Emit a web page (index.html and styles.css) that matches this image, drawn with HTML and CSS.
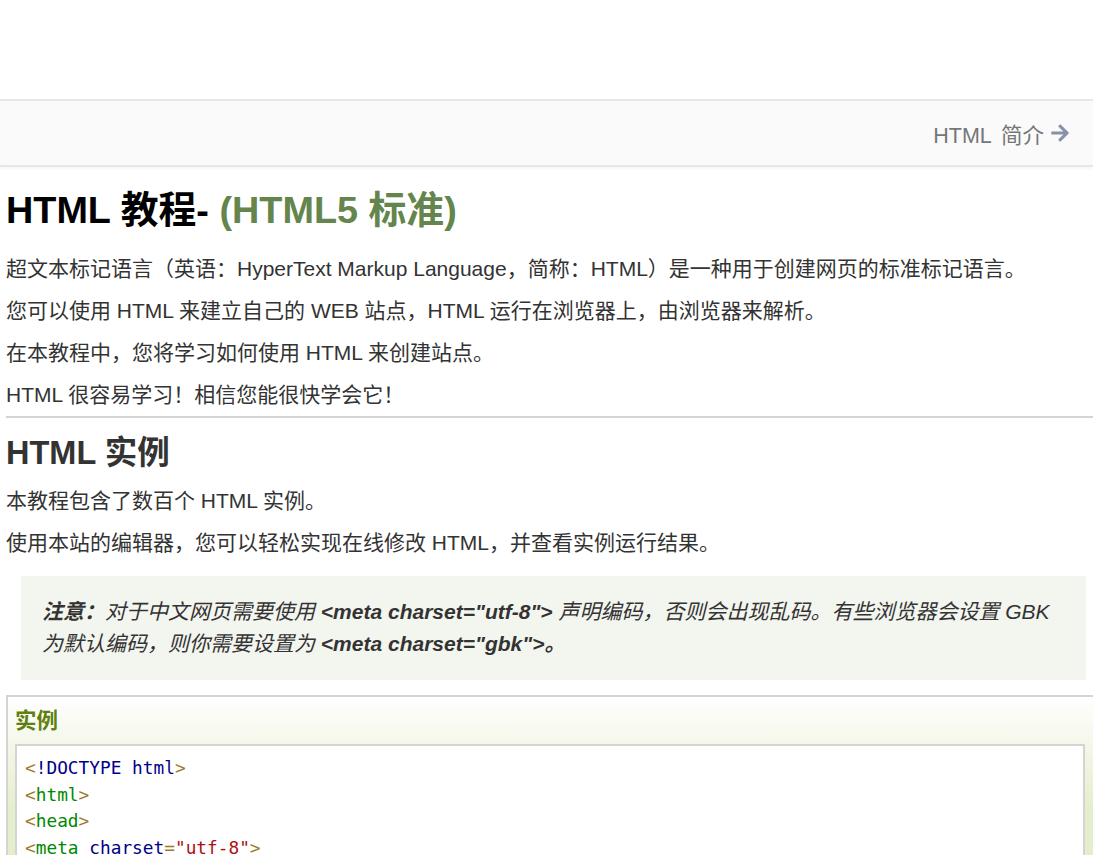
FILE: index.html
```html
<!DOCTYPE html>
<html lang="zh-CN">
<head>
<meta charset="utf-8">
<title>HTML 教程</title>
<link rel="stylesheet" href="styles.css">
</head>
<body>
<div class="top-space"></div>
<nav class="nav-bar">
  <a class="next-link" href="#">HTML 简介
    <svg class="arrow" viewBox="0 0 448 512" width="20" height="20" aria-hidden="true"><path fill="currentColor" d="M190.5 66.9l22.2-22.2c9.4-9.4 24.6-9.4 33.9 0L441 239c9.4 9.4 9.4 24.6 0 33.9L246.6 467.3c-9.4 9.4-24.6 9.4-33.9 0l-22.2-22.2c-9.5-9.5-9.3-25 .4-34.3L311.4 296H24c-13.3 0-24-10.7-24-24v-32c0-13.3 10.7-24 24-24h287.4L190.9 101.2c-9.8-9.3-10-24.8-.4-34.3z"/></svg>
  </a>
</nav>
<main class="article">
  <h1 class="title">HTML 教程- <span class="title-sub">(HTML5 标准)</span></h1>
  <p>超文本标记语言（英语：HyperText Markup Language，简称：HTML）是一种用于创建网页的标准标记语言。</p>
  <p>您可以使用 HTML 来建立自己的 WEB 站点，HTML 运行在浏览器上，由浏览器来解析。</p>
  <p>在本教程中，您将学习如何使用 HTML 来创建站点。</p>
  <p>HTML 很容易学习！相信您能很快学会它！</p>
  <hr class="divider">
  <h2 class="section-title">HTML 实例</h2>
  <p>本教程包含了数百个 HTML 实例。</p>
  <p>使用本站的编辑器，您可以轻松实现在线修改 HTML，并查看实例运行结果。</p>
  <div class="note">
    <p><strong>注意：</strong>对于中文网页需要使用 <strong>&lt;meta charset="utf-8"&gt;</strong> 声明编码，否则会出现乱码。有些浏览器会设置 GBK 为默认编码，则你需要设置为 <strong>&lt;meta charset="gbk"&gt;。</strong></p>
  </div>
  <div class="example">
    <h2 class="example-title">实例</h2>
    <div class="code">
      <div class="line"><span class="pu">&lt;</span><span class="kw">!DOCTYPE html</span><span class="pu">&gt;</span></div>
      <div class="line"><span class="pu">&lt;</span><span class="tg">html</span><span class="pu">&gt;</span></div>
      <div class="line"><span class="pu">&lt;</span><span class="tg">head</span><span class="pu">&gt;</span></div>
      <div class="line"><span class="pu">&lt;</span><span class="tg">meta</span> <span class="kw">charset</span><span class="eq">=</span><span class="st">"utf-8"</span><span class="pu">&gt;</span></div>
      <div class="line"><span class="pu">&lt;</span><span class="tg">title</span><span class="pu">&gt;</span>菜鸟教程(runoob.com)<span class="pu">&lt;/</span><span class="tg">title</span><span class="pu">&gt;</span></div>
      <div class="line"><span class="pu">&lt;/</span><span class="tg">head</span><span class="pu">&gt;</span></div>
    </div>
  </div>
</main>
</body>
</html>
```
FILE: styles.css
```css
html, body {
  overflow: hidden;
}
body {
  margin: 0;
  background: #fff;
  color: #333;
  font-family: "Liberation Sans", Arial, "Noto Sans CJK SC", sans-serif;
  font-size: 21px;
}
.top-space {
  height: 99px;
}
.nav-bar {
  height: 64px;
  background: #fafafa;
  border-top: 2px solid #e5e7ef;
  border-bottom: 2px solid #e5e7ef;
  box-shadow: 0 2px 3px rgba(0, 0, 0, 0.04);
  display: flex;
  align-items: center;
  justify-content: flex-end;
  padding-right: 23px;
}
.next-link {
  color: #767676;
  text-decoration: none;
  display: flex;
  align-items: center;
  gap: 6px;
  font-size: 21.5px;
  word-spacing: 4px;
}
.arrow {
  color: #8891a7;
  display: block;
}
.article {
  margin-left: 6px;
  width: 1088px;
}
.title {
  margin: 23px 0 22px;
  font-size: 37.8px;
  line-height: 41px;
  color: #000;
  font-weight: bold;
}
.title-sub {
  color: #64854c;
}
p {
  margin: 10px 0 0;
  line-height: 32px;
}
.divider {
  border: 0;
  border-top: 2px solid #d4d4d4;
  height: 0;
  margin: 5px 0 0;
}
.section-title {
  margin: 17px 0 14px;
  font-size: 32.5px;
  line-height: 36px;
  color: #333;
}
.note {
  margin: 17px 8px 15px 15px;
  background: #f3f5ef;
  padding: 20px 21px;
}
.note p {
  font-style: italic;
  margin: 0;
}
.example {
  border: 2px solid #d4d4d4;
  border-right: 0;
  background: linear-gradient(#fff, #e5eecc 110px);
  padding: 10px 9px 20px 7px;
}
.example-title {
  margin: 0 0 9px;
  font-size: 21.5px;
  line-height: 28px;
  color: #617f10;
}
.code {
  background: #fff;
  border: 2px solid #d4d4d4;
  padding: 9px 8px 7px;
  font-family: "DejaVu Sans Mono", "Liberation Mono", monospace;
  font-size: 17.8px;
  line-height: 26.7px;
  color: #000;
}
.line {
  white-space: pre;
}
.pu, .eq { color: #9a7b2a; }
.kw { color: #000088; }
.tg { color: #008800; }
.st { color: #a11; }
```
